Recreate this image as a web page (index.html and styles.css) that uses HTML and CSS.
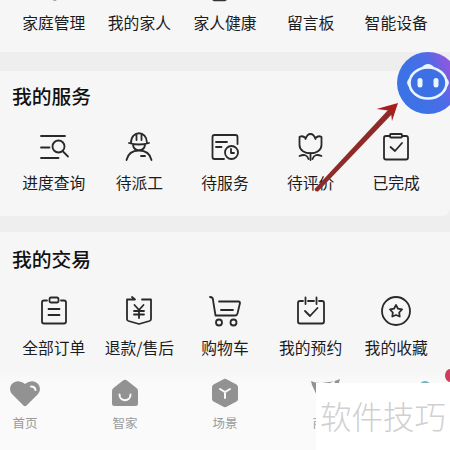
FILE: index.html
```html
<!DOCTYPE html>
<html lang="zh-CN">
<head>
<meta charset="utf-8">
<title>我的</title>
<link rel="stylesheet" href="styles.css">
</head>
<body>
<main class="screen">
  <section class="card family">
    <div class="grid">
      <span class="item">家庭管理</span>
      <span class="item">我的家人</span>
      <span class="item">家人健康</span>
      <span class="item">留言板</span>
      <span class="item">智能设备</span>
    </div>
    <svg class="cut" viewBox="0 0 450 3"><path d="M52 0h5l-2 .6zM212 0h15l-2 1.200h-11z"/></svg>
  </section>

  <section class="card services">
    <h2>我的服务</h2>
    <div class="grid">
      <div class="item">
        <svg class="icon" viewBox="-18 -18 36 36"><path d="M-13-11H11M-13 .5H-4.500M-13 11H4.500M9 4.500L14 9.500"/><circle cx="4.500" cy="-.5" r="6"/></svg>
        <span>进度查询</span>
      </div>
      <div class="item">
        <svg class="icon" viewBox="-18 -18 36 36"><path d="M-8-4C-8-17 8-17 8-4M-10-4Q0-1 10-4M-2.500-12.500V-7M2.500-12.500V-7M-6-2C-5 5 5 5 6-2M-12.500 13C-11 6.500-7 3.500 0 3.500S11 6.500 12.500 13M2 9H6"/></svg>
        <span>待派工</span>
      </div>
      <div class="item">
        <svg class="icon" viewBox="-18 -18 36 36"><path d="M-1 12H-10.500Q-12.500 12-12.500 10V-10Q-12.500-12 -10.500-12H10.500Q12.500-12 12.500-10V-3M-9-5H2M-9 0H-3.500M6 2V6H9"/><circle cx="6.500" cy="5.500" r="6.500"/></svg>
        <span>待服务</span>
      </div>
      <div class="item">
        <svg class="icon" viewBox="-17.500 -18 36 36"><path d="M-5-9Q-8-12-11-10V-2C-11 9 11 9 11-2V-10Q8-12 5-9M-5-8C-4-11-2-13 0-13S4-11 5-8M0 6V13M-2 12Q-4 6-11 9M2 12Q4 6 11 9"/></svg>
        <span>待评价</span>
      </div>
      <div class="item">
        <svg class="icon" viewBox="-18 -18 36 36"><path d="M-6-11H-10Q-12-11-12-9V10.500Q-12 12.500-10 12.500H10Q12 12.500 12 10.500V-9Q12-11 10-11H6M-5.500 0L-1 4L6-4"/><rect x="-6" y="-13" width="12" height="3.500" rx="1"/></svg>
        <span>已完成</span>
      </div>
    </div>
  </section>

  <section class="card trades">
    <h2>我的交易</h2>
    <div class="grid">
      <div class="item">
        <svg class="icon" viewBox="-18 -18 36 36"><path d="M-7-10.500H-10Q-12-10.500-12-8.500V10.500Q-12 12.500-10 12.500H10Q12 12.500 12 10.500V-8.500Q12-10.500 10-10.500H7M-5.500-2H5.500M-5.500 4H5.500"/><rect x="-4.500" y="-13.500" width="9" height="5" rx="1.500"/></svg>
        <span>全部订单</span>
      </div>
      <div class="item">
        <svg class="icon" viewBox="-18 -18 36 36"><path d="M-7-14L-4-11.500H-12V8Q-12 9.500-10.500 10L0 13L10.500 10Q12 9.500 12 8V-11.500H3M-4.500-6L0-1L4.500-6M0-1V7M-5 0H5M-5 3.500H5"/></svg>
        <span>退款/售后</span>
      </div>
      <div class="item">
        <svg class="icon" viewBox="-18 -18 36 36"><path d="M-15-14Q-12-14-12-11L-9.500 4.500H10Q12 4.500 12.500 2.500L15-8Q15-9.500 13.500-9.500H-6M-4-1H8"/><circle cx="-6" cy="11.500" r="3"/><circle cx="8.500" cy="11.500" r="3"/></svg>
        <span>购物车</span>
      </div>
      <div class="item">
        <svg class="icon" viewBox="-18 -18 36 36"><path d="M-8-10H-11Q-13-10-13-8V10.500Q-13 12.500-11 12.500H11Q13 12.500 13 10.500V-8Q13-10 11-10H8M-3-10H3M-5.500-13.500V-7M5.500-13.500V-7M-6 0L-1 5L6.500-3"/></svg>
        <span>我的预约</span>
      </div>
      <div class="item">
        <svg class="icon" viewBox="-18 -18 36 36"><circle cx="0" cy="0" r="14"/><path d="M0-6L2-2.300L6-1.500L3.200 1.500L3.700 5.500L0 4L-3.700 5.500L-3.200 1.500L-6-1.500L-2-2.300Z"/></svg>
        <span>我的收藏</span>
      </div>
    </div>
  </section>

  <nav class="tabs">
    <div class="tab">
      <svg viewBox="-18 -16 36 32"><path d="M-1.500 12.500L-13 1C-19-6-10-17 0-9C10-17 19-6 13 1L1.500 12.500Q0 14-1.500 12.500Z"/><path class="light" d="M6-6.500Q10-6.500 10.500-3"/></svg>
      <span>首页</span>
    </div>
    <div class="tab">
      <svg viewBox="-18 -16 36 32"><path d="M-2-12.500Q0-14 2-12.500L11.500-5Q13-4 13-2V10.500Q13 13 10.500 13H-10.500Q-13 13-13 10.500V-2Q-13-4-11.500-5Z"/><path class="light" d="M-5.500 1.500C-5.500 9 5.500 9 5.500 1.500"/></svg>
      <span>智家</span>
    </div>
    <div class="tab">
      <svg viewBox="-18 -16 36 32"><path d="M-2-13.500Q0-15 2-13.500L11.500-8.500Q13-7.500 13-6V6Q13 7.500 11.500 8.500L2 13.500Q0 15 -2 13.500L-11.500 8.500Q-13 7.500-13 6V-6Q-13-7.500-11.500-8.500Z"/><path class="light" d="M-5-4L0-1L5-4M0-1V5"/></svg>
      <span>场景</span>
    </div>
    <div class="tab">
      <svg viewBox="-18 -16 36 32"><path d="M-14-12Q-8-9 0-10.500Q9-11 15-14L13-7L7 5H-7L-13-8Z"/><path class="light" d="M-7-8L0-6L9-11"/></svg>
      <span>商城</span>
    </div>
    <div class="tab">
      <svg class="mine" viewBox="-18 -16 36 32"><circle cx="0" cy="-6" r="6"/></svg>
    </div>
  </nav>
</main>

<i class="dot"></i>
<svg class="robot" viewBox="0 0 53 62">
  <defs><linearGradient id="blue" x1="0" y1=".65" x2="1" y2=".2"><stop offset=".25" stop-color="#3c72e5"/><stop offset=".6" stop-color="#4e6be8"/><stop offset=".85" stop-color="#8c58de"/></linearGradient></defs>
  <circle cx="31" cy="31" r="31" fill="url(#blue)"/>
  <path d="M24 16Q31 8 38 16ZM13 26Q7 30 13 36ZM49 26Q55 30 49 36Z" fill="#eaf6ff"/>
  <ellipse cx="31" cy="31" rx="18.500" ry="15.500" fill="#3d70e5" stroke="#eaf6ff" stroke-width="2.600"/>
  <rect x="20.500" y="26" width="5" height="9.500" rx="2.500" fill="#eaf6ff"/>
  <rect x="36.500" y="26" width="5" height="9.500" rx="2.500" fill="#eaf6ff"/>
</svg>
<svg class="arrow" viewBox="310 98 92 96">
  <path d="M314.500 189L389 109L393 113L318 191.500Q315 192 314.500 189Z" fill="#8e2a28"/>
  <path d="M398 103L376.500 109L388.500 110.500L391 113L392 121Z" fill="#a81e1c"/>
</svg>
<div class="watermark">软件技巧</div>
</body>
</html>
```

FILE: styles.css
```css
* { box-sizing: border-box; }

body {
  margin: 0;
  width: 450px;
  height: 450px;
  position: relative;
  overflow: hidden;
  background: #eeeeee;
  color: #1c1c1c;
  font-family: "Noto Sans CJK SC", sans-serif;
}

.screen {
  display: flex;
  flex-direction: column;
  height: 450px;
}

.card {
  background: #f6f6f6;
  padding: 0 11px;
  flex: none;
}

.family {
  height: 52px;
  padding-top: 11px;
  margin-bottom: 19px;
  position: relative;
}

.cut {
  position: absolute;
  left: 0;
  top: 0;
  width: 450px;
  height: 3px;
  fill: #333;
}

.services {
  height: 145px;
  padding-top: 10px;
  margin-bottom: 16px;
  border-radius: 0 8px 8px 0;
}

.trades {
  height: 140px;
  padding-top: 12px;
}

h2 {
  margin: 0 0 0 1px;
  font-size: 19.8px;
  line-height: 30px;
  font-weight: 500;
  color: #111;
}

.grid {
  display: grid;
  grid-template-columns: repeat(5, 1fr);
}

.services .grid { margin-top: 18px; }
.trades .grid { margin-top: 19px; }

.item {
  display: flex;
  flex-direction: column;
  align-items: center;
  font-size: 15.8px;
  line-height: 24px;
  white-space: nowrap;
}

.icon {
  width: 36px;
  height: 36px;
  margin-bottom: 6px;
  fill: none;
  stroke: #292929;
  stroke-width: 1.8;
  stroke-linecap: round;
  stroke-linejoin: round;
}

.trades .icon { margin-bottom: 7px; }

.tabs {
  flex: 1;
  display: grid;
  grid-template-columns: repeat(5, 50px);
  column-gap: 50px;
  padding-top: 5px;
  background: linear-gradient(#f7f7f7, #fafafa 15px);
}

.tab {
  display: flex;
  flex-direction: column;
  align-items: center;
  font-size: 12.5px;
  line-height: 18px;
  color: #999;
}

.tab svg {
  width: 36px;
  height: 32px;
  margin-bottom: 5px;
  fill: #929292;
}

.tab .mine { fill: #72b4bc; }

.tab .light {
  fill: none;
  stroke: #fafafa;
  stroke-width: 2;
  stroke-linecap: round;
}

.dot {
  position: absolute;
  left: 445px;
  top: 369px;
  width: 5px;
  height: 13px;
  border-radius: 5px 0 0 5px / 6.5px 0 0 6.5px;
  background: #cf3c5e;
}

.robot {
  position: absolute;
  left: 397px;
  top: 52px;
  width: 53px;
  height: 62px;
}

.arrow {
  position: absolute;
  left: 310px;
  top: 98px;
  width: 92px;
  height: 96px;
}

.watermark {
  position: absolute;
  left: 316px;
  top: 383px;
  width: 134px;
  height: 67px;
  padding-left: 4px;
  background: #fff;
  color: #d0d0d0;
  font-size: 31.5px;
  font-weight: 300;
  line-height: 64px;
  white-space: nowrap;
}
```
